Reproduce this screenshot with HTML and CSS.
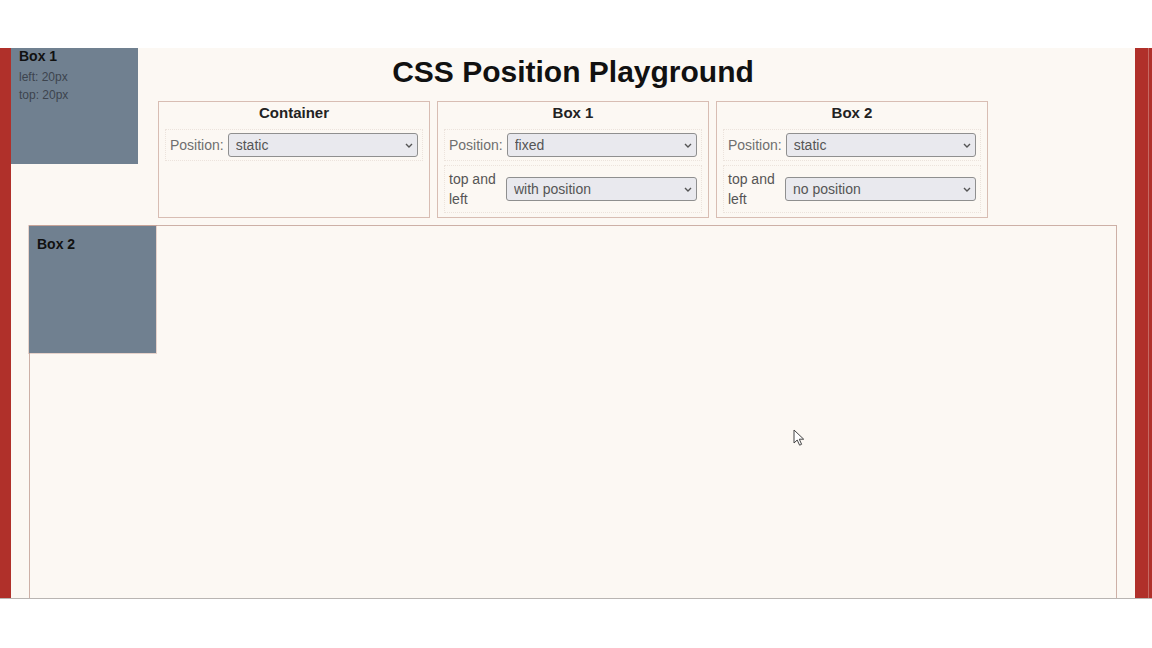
FILE: index.html
```html
<!DOCTYPE html>
<html>
<head>
<meta charset="utf-8">
<title>CSS Position Playground</title>
<link rel="stylesheet" href="styles.css">
</head>
<body>
<div class="frame">
  <div class="rail rail-left"></div>
  <div class="viewport">
    <div class="box box1">
      <div class="box-title">Box 1</div>
      <div class="box-info">left: 20px</div>
      <div class="box-info">top: 20px</div>
    </div>

    <h1 class="title">CSS Position Playground</h1>

    <div class="controls">
      <section class="panel">
        <h2 class="panel-title">Container</h2>
        <div class="row">
          <label class="row-label">Position:</label>
          <div class="select-wrap">
            <select class="select"><option>static</option></select>
            <svg class="chev" width="8" height="5" viewBox="0 0 8 5"><path d="M1 1l3 3 3-3" fill="none" stroke="#555" stroke-width="1.4"/></svg>
          </div>
        </div>
      </section>
      <section class="panel">
        <h2 class="panel-title">Box 1</h2>
        <div class="row">
          <label class="row-label">Position:</label>
          <div class="select-wrap">
            <select class="select"><option>fixed</option></select>
            <svg class="chev" width="8" height="5" viewBox="0 0 8 5"><path d="M1 1l3 3 3-3" fill="none" stroke="#555" stroke-width="1.4"/></svg>
          </div>
        </div>
        <div class="row row-tall">
          <label class="row-label row-label-wrap">top and left</label>
          <div class="select-wrap">
            <select class="select"><option>with position</option></select>
            <svg class="chev" width="8" height="5" viewBox="0 0 8 5"><path d="M1 1l3 3 3-3" fill="none" stroke="#555" stroke-width="1.4"/></svg>
          </div>
        </div>
      </section>
      <section class="panel">
        <h2 class="panel-title">Box 2</h2>
        <div class="row">
          <label class="row-label">Position:</label>
          <div class="select-wrap">
            <select class="select"><option>static</option></select>
            <svg class="chev" width="8" height="5" viewBox="0 0 8 5"><path d="M1 1l3 3 3-3" fill="none" stroke="#555" stroke-width="1.4"/></svg>
          </div>
        </div>
        <div class="row row-tall">
          <label class="row-label row-label-wrap">top and left</label>
          <div class="select-wrap">
            <select class="select"><option>no position</option></select>
            <svg class="chev" width="8" height="5" viewBox="0 0 8 5"><path d="M1 1l3 3 3-3" fill="none" stroke="#555" stroke-width="1.4"/></svg>
          </div>
        </div>
      </section>
    </div>

    <div class="stage">
      <div class="box box2">
        <div class="box-title">Box 2</div>
      </div>
    </div>

    <svg class="cursor" width="13" height="18" viewBox="0 0 13 18">
      <path d="M1 1v13l3.2-3 2.4 5.2 2-0.9-2.3-5.1h4.4z" fill="#fff" stroke="#444" stroke-width="1" stroke-linejoin="round"/>
    </svg>
  </div>
  <div class="rail rail-right"><div class="rail-line"></div></div>
</div>
</body>
</html>
```

FILE: styles.css
```css
* { box-sizing: border-box; }

body {
  margin: 0;
  background: #ffffff;
  font-family: "Liberation Sans", Arial, sans-serif;
}

.frame {
  margin-top: 48px;
  height: 551px;
  display: flex;
  border-bottom: 1px solid #b9b5b2;
  overflow: hidden;
}

.rail {
  background: #b0302a;
  flex: none;
}
.rail-left { width: 11px; }
.rail-right {
  width: 17px;
  display: flex;
  justify-content: flex-end;
  padding-right: 3px;
}
.rail-line {
  width: 1px;
  background: #c66a63;
}

.viewport {
  flex: 1;
  position: relative;
  background: #fcf8f3;
  padding: 0 18px;
  overflow: hidden;
}

.title {
  margin: 7px 0 0;
  font-size: 30px;
  line-height: 34px;
  font-weight: bold;
  text-align: center;
  color: #111;
}

.controls {
  margin-top: 12px;
  display: grid;
  grid-template-columns: repeat(3, 272px);
  column-gap: 7px;
  justify-content: center;
}

.panel {
  border: 1px solid #d8bdb3;
  padding: 1px 6px 4px;
}

.panel-title {
  margin: 0 0 6px;
  font-size: 15px;
  line-height: 20px;
  font-weight: bold;
  text-align: center;
  color: #222;
}

.row {
  display: flex;
  align-items: center;
  gap: 4px;
  padding: 3px 4px;
  border: 1px dotted #ece3dc;
}
.row-tall {
  margin-top: 4px;
  gap: 6px;
}

.row-label {
  font-size: 14px;
  line-height: 20px;
  color: #6f6f6f;
  flex: none;
}
.row-label-wrap {
  width: 51px;
  color: #555;
}

.select-wrap {
  position: relative;
  flex: 1;
}

.select {
  display: block;
  width: 100%;
  height: 24px;
  appearance: none;
  -webkit-appearance: none;
  background: #e9e9ee;
  border: 1px solid #8f8f8f;
  border-radius: 3px;
  padding: 0 20px 0 7px;
  font-family: "Liberation Sans", Arial, sans-serif;
  font-size: 14px;
  color: #555;
}

.chev {
  position: absolute;
  right: 5px;
  top: 10px;
  pointer-events: none;
}

.stage {
  margin-top: 7px;
  height: 400px;
  border: 1px solid #cdb0a6;
}

.box {
  width: 127px;
  height: 127px;
  background: #708090;
  padding: 8px;
}
.box1 {
  position: absolute;
  left: 0;
  top: -10px;
  height: 126px;
}
.box2 {
  margin: 0 0 0 -1px;
  padding-top: 9px;
  box-shadow: 0 0 0 1px rgba(190, 140, 125, 0.35);
}

.box-title {
  font-size: 14px;
  line-height: 18px;
  font-weight: bold;
  color: #111;
}
.box1 .box-title {
  line-height: 20px;
  margin-bottom: 2px;
}

.box-info {
  font-size: 12px;
  line-height: 18px;
  color: #3d444e;
}

.cursor {
  position: absolute;
  left: 782px;
  top: 381px;
}
```
